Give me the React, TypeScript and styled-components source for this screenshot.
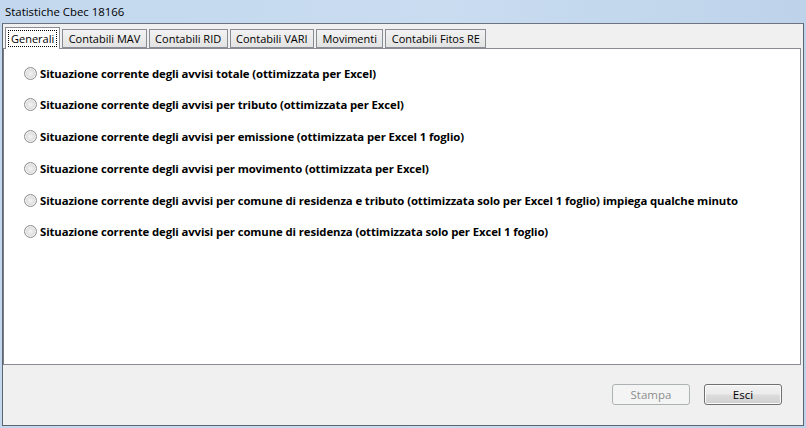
import styled, { createGlobalStyle } from "styled-components";

const GlobalStyle = createGlobalStyle`
  html, body {
    margin: 0;
    padding: 0;
    width: 806px;
    height: 428px;
    overflow: hidden;
  }
  body {
    font-family: "Open Sans", "Liberation Sans", sans-serif;
  }
`;

const Window = styled.div`
  width: 806px;
  height: 428px;
  display: flex;
  flex-direction: column;
  background: linear-gradient(90deg, #c3d8ee 0%, #c9dcf0 55%, #bed3ea 100%);
  box-sizing: border-box;
  padding: 0 2px 2px 2px;
`;

const TitleBar = styled.div`
  height: 23px;
  display: flex;
  align-items: center;
  padding-left: 3px;
  font-size: 11.4px;
  color: #000;
  box-sizing: border-box;
  padding-bottom: 1px;
`;

const Client = styled.div`
  flex: 1;
  display: flex;
  flex-direction: column;
  background: #f0f0f0;
  border: 1px solid #5c6570;
  border-top-color: #6b7480;
  padding: 1px 2px 0 0;
`;

const TabStrip = styled.div`
  display: flex;
  align-items: flex-end;
  height: 23px;
  padding-left: 2px;
  gap: 2px;
  position: relative;
  z-index: 1;
`;

const Tab = styled.div<{ $active?: boolean }>`
  height: ${(p) => (p.$active ? "22px" : "19px")};
  display: flex;
  align-items: center;
  justify-content: center;
  box-sizing: border-box;
  padding: 0 ${(p) => (p.$active ? "3px" : "5.4px")};
  font-size: 11px;
  color: #000;
  border: 1px solid #898c95;
  border-bottom: ${(p) => (p.$active ? "none" : "1px solid #898c95")};
  background: ${(p) =>
    p.$active ? "#ffffff" : "linear-gradient(#f2f2f2, #e3e3e3)"};
  margin-bottom: ${(p) => (p.$active ? "-1px" : "0")};
`;

const FocusLabel = styled.span`
  outline: 1px dotted #000;
  outline-offset: 0;
  padding: 0 2px;
  line-height: 15px;
`;

const Panel = styled.div`
  height: 317px;
  background: #fff;
  border: 1px solid #898c95;
  border-left-color: #7a7d85;
  display: flex;
  flex-direction: column;
  padding: 15px 0 0 20px;
  gap: 13.8px;
  box-sizing: border-box;
`;

const Option = styled.label`
  display: flex;
  align-items: center;
  gap: 3px;
  height: 18px;
  font-size: 11.35px;
  font-weight: 700;
  color: #000;
  white-space: nowrap;
  letter-spacing: -0.1px;
`;

const RadioDot = styled.span`
  width: 13px;
  height: 13px;
  border-radius: 50%;
  box-sizing: border-box;
  border: 1px solid #8f8f8f;
  background: radial-gradient(circle at 50% 50%, #f4f4f4 0%, #e2e2e2 45%, #c9c9c9 80%);
  box-shadow: inset 0 0 0 1px #f6f6f6;
  flex-shrink: 0;
`;

const Footer = styled.div`
  flex: 1;
  display: flex;
  justify-content: flex-end;
  align-items: flex-start;
  padding: 19px 19px 0 0;
  gap: 14px;
`;

const Button = styled.button`
  width: 78px;
  height: 21px;
  box-sizing: border-box;
  border-radius: 3px;
  font-family: "Open Sans", "Liberation Sans", sans-serif;
  font-size: 11.5px;
  padding: 0;
  color: #000;
  border: 1px solid #707070;
  background: linear-gradient(#f2f2f2 0%, #ebebeb 48%, #dddddd 52%, #cfcfcf 100%);
  box-shadow: inset 0 0 0 1px #fbfbfb;
  &:disabled {
    color: #8d8d8d;
    border-color: #adb2b5;
    background: #f4f4f4;
    box-shadow: none;
  }
`;

const options = [
  "Situazione corrente degli avvisi totale (ottimizzata per Excel)",
  "Situazione corrente degli avvisi per tributo (ottimizzata per Excel)",
  "Situazione corrente degli avvisi per emissione (ottimizzata per Excel 1 foglio)",
  "Situazione corrente degli avvisi per movimento (ottimizzata per Excel)",
  "Situazione corrente degli avvisi per comune di residenza e tributo (ottimizzata solo per Excel 1 foglio) impiega qualche minuto",
  "Situazione corrente degli avvisi per comune di residenza (ottimizzata solo per Excel 1 foglio)",
];

const tabs = [
  "Contabili MAV",
  "Contabili RID",
  "Contabili VARI",
  "Movimenti",
  "Contabili Fitos RE",
];

export default function App() {
  return (
    <>
      <GlobalStyle />
      <Window>
        <TitleBar>Statistiche Cbec 18166</TitleBar>
        <Client>
          <TabStrip>
            <Tab $active>
              <FocusLabel>Generali</FocusLabel>
            </Tab>
            {tabs.map((t) => (
              <Tab key={t}>{t}</Tab>
            ))}
          </TabStrip>
          <Panel>
            {options.map((o) => (
              <Option key={o}>
                <RadioDot />
                {o}
              </Option>
            ))}
          </Panel>
          <Footer>
            <Button disabled>Stampa</Button>
            <Button>Esci</Button>
          </Footer>
        </Client>
      </Window>
    </>
  );
}
